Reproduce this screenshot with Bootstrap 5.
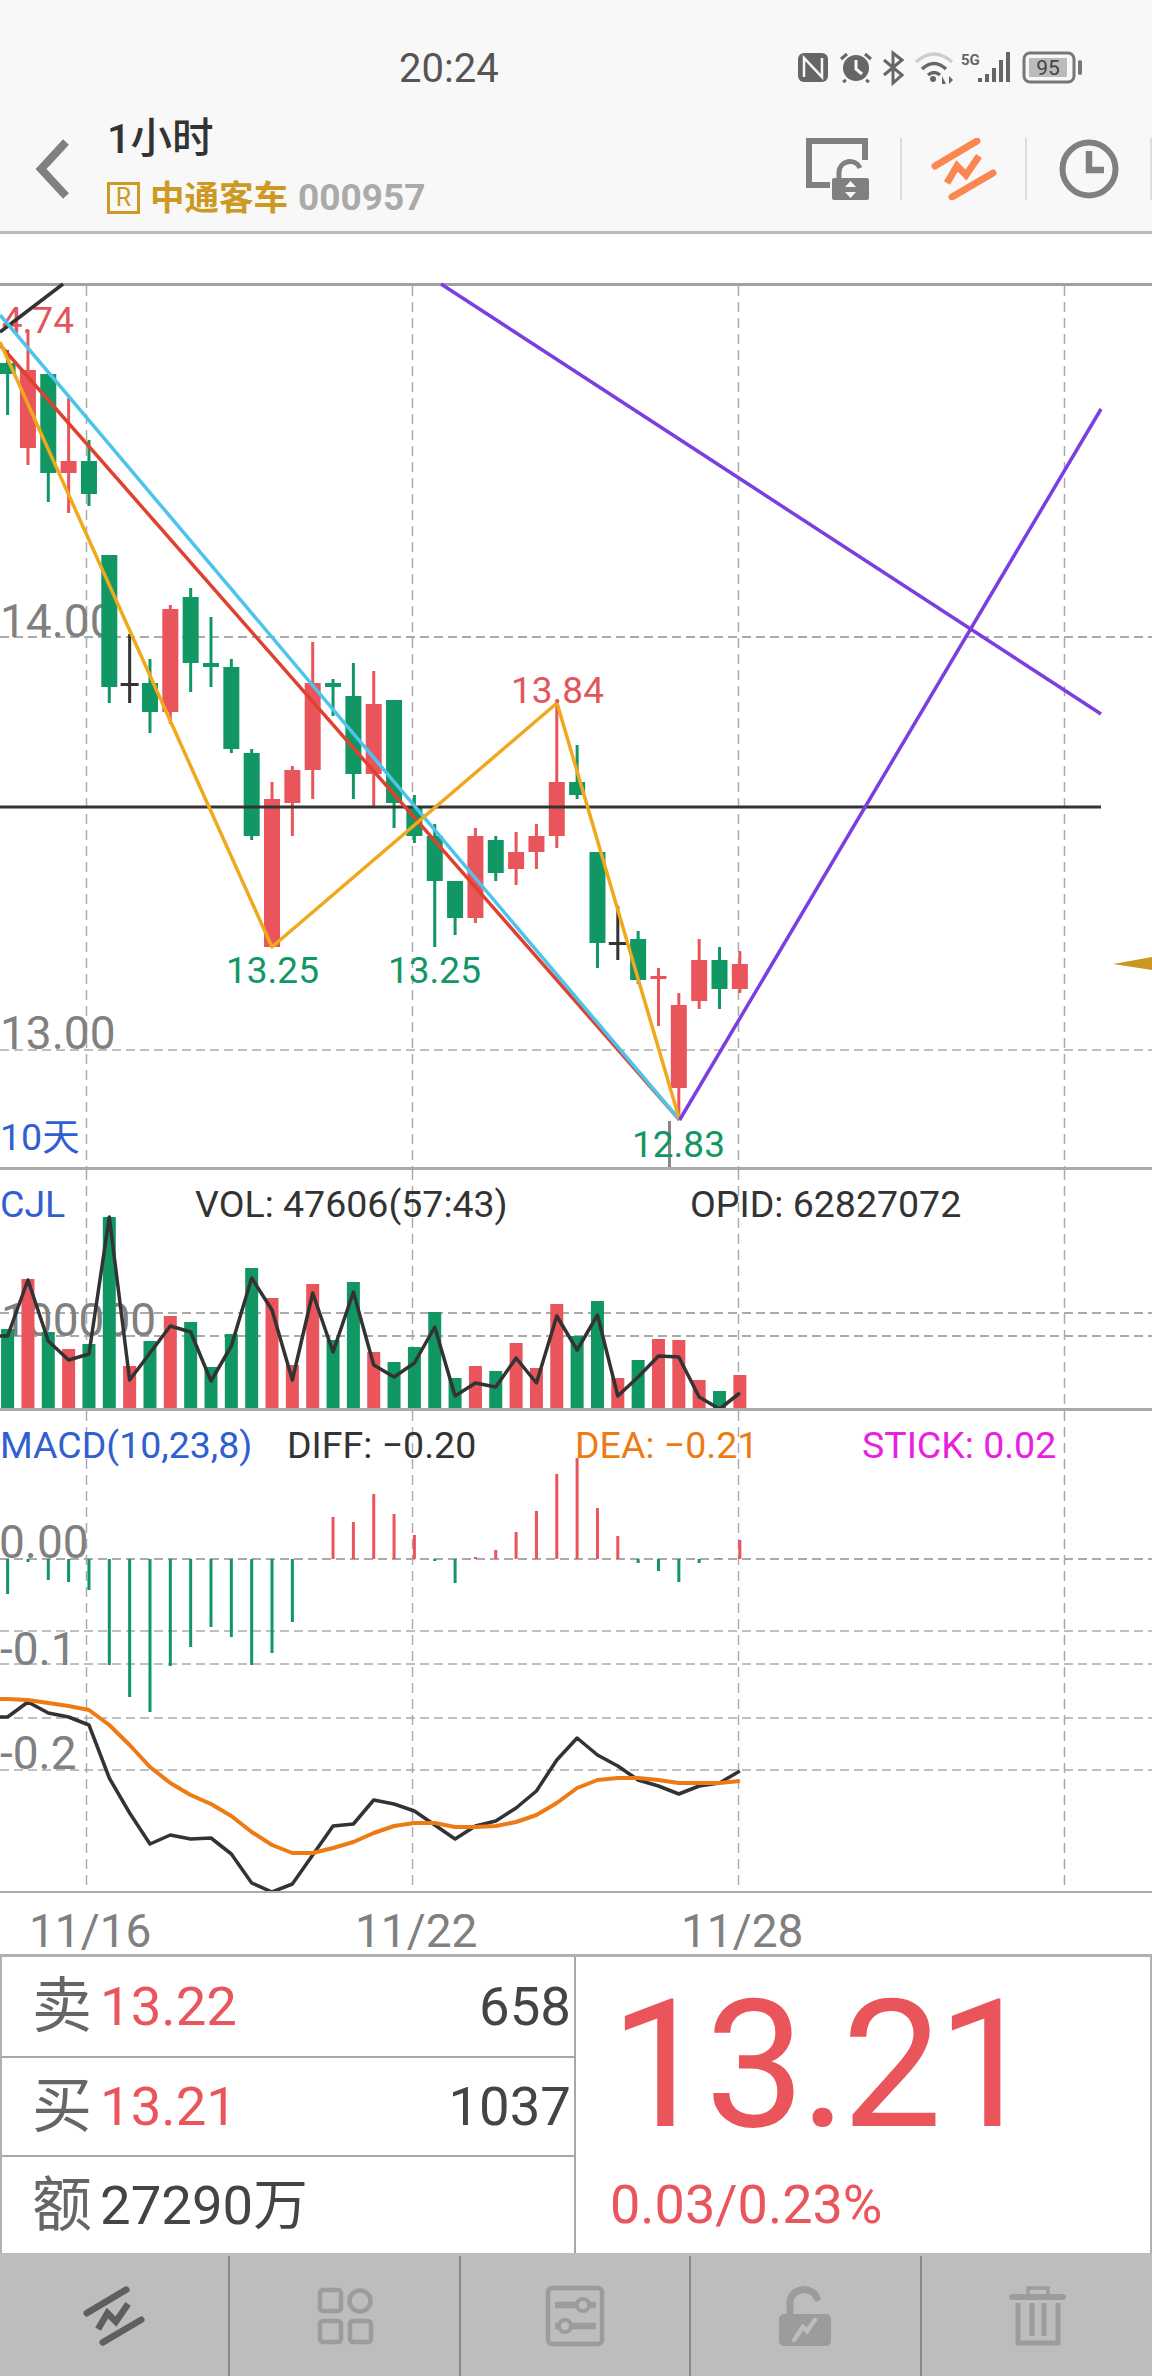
<!DOCTYPE html>
<html>
<head>
    <title>1小时 中通客车 000957</title>
    <link href="https://cdn.jsdelivr.net/npm/bootstrap@5.3.0/dist/css/bootstrap.min.css" rel="stylesheet">
    <style>
        body {
            font-family: Roboto, "Noto Sans CJK SC", sans-serif;
            background: #fff;
            width: 1152px;
            height: 2376px;
            overflow: hidden;
        }
        .top-head { background: #f8f8f8; border-bottom: 3px solid #bbb; height: 234px; }
        .status-strip { height: 96px; padding: 40px 66px 0 399px; }
        .status-icons { margin-top: 10px; }
        .clock-text { font-size: 40px; line-height: 57px; color: #555; }
        .nav-strip { height: 135px; }
        .back-btn { margin: 42px 32px 0 30px; }
        .title-main { font-size: 41.5px; line-height: 46px; font-weight: 500; color: #333; margin-top: 20px; }
        .title-sub { font-size: 34.5px; line-height: 40px; font-weight: 700; margin-top: 16px; }
        .rate-box { width: 33px; height: 32px; border: 3px solid #cc9a22; color: #cc9a22; font-size: 25px; line-height: 26px; font-weight: 400; text-align: center; margin-right: 10px; }
        .stock-name { color: #cc9a22; }
        .stock-code { color: #aaa; margin-left: 10px; font-size: 37px; }
        .tool-cell { height: 62px; margin-top: 42px; border-right: 2px solid #ddd; }
        .chart-pane { display: block; }
        .num-axis { fill: #808080; font-size: 46px; }
        .peak-up { fill: #e2555c; font-size: 37px; }
        .peak-down { fill: #119763; font-size: 37px; }
        .legend-txt { font-size: 37.5px; }
        .date-strip { height: 61px; padding-left: 29px; color: #808080; font-size: 46px; line-height: 54px; padding-top: 11px; }
        .date-cell { width: 326px; }
        .quote-board { height: 299px; border-top: 3px solid #b0b0b0; border-left: 2px solid #b0b0b0; border-right: 2px solid #b0b0b0; }
        .quote-left { width: 574px; border-right: 2px solid #a8a8a8; }
        .quote-row { height: 99px; padding: 0 3px 0 30px; font-size: 54.5px; color: #444; }
        .quote-row + .quote-row { border-top: 2px solid #a8a8a8; }
        .quote-tag { font-size: 60px; color: #666; margin-right: 8px; line-height: 1; }
        .quote-red { color: #ea555b; }
        .big-price { font-size: 178px; line-height: 170px; letter-spacing: -5px; color: #ea555b; margin: 23px 0 0 34px; }
        .small-change { font-size: 54px; line-height: 60px; color: #ea555b; margin: 25px 0 0 34px; }
        .foot-bar { background: #bdbdbd; height: 123px; padding-top: 3px; }
        .foot-cell { width: 230.4px; border-right: 2px solid #888; }
        .foot-cell:last-child { border-right: 0; }
    </style>
</head>
<body>
    <svg width="0" height="0" class="position-absolute">
        <symbol id="zig" viewBox="0 0 70 66">
            <g fill="none" stroke="currentColor" stroke-width="7" stroke-linecap="round">
                <path d="M6 30 48 5M23 61 64 37"/>
                <path d="M18 47 28 30 37 39 50 20" stroke-linecap="butt"/>
            </g>
        </symbol>
    </svg>

    <header class="top-head">
        <div class="status-strip d-flex">
            <span class="clock-text">20:24</span>
            <svg class="status-icons ms-auto" width="290" height="36" viewBox="796 50 290 36">
                <rect x="798" y="53" width="30" height="29" rx="6" fill="#666"/>
                <path d="M804 77V58L822 77V58" fill="none" stroke="#f8f8f8" stroke-width="2.500"/>
                <circle cx="856" cy="68" r="13" fill="#666"/>
                <path d="M856 60V69L862 74" fill="none" stroke="#f8f8f8" stroke-width="3"/>
                <path d="M841 59 847 54M871 59 865 54M846 80 843 82M866 80 869 82" stroke="#666" stroke-width="3"/>
                <path d="M884 60 902 75 893 83V53L902 60 884 75" fill="none" stroke="#666" stroke-width="3"/>
                <path d="M916 62Q934 46 952 62" fill="none" stroke="#ccc" stroke-width="3.500"/>
                <path d="M922 69Q934 58 946 69M928 75Q934 70 940 75" fill="none" stroke="#666" stroke-width="3.500"/>
                <circle cx="933" cy="79" r="3" fill="#666"/>
                <path d="M942 84V76L946 84ZM949 76V84L953 80Z" fill="#666"/>
                <text x="961" y="65" font-size="15" font-weight="700" fill="#666">5G</text>
                <path d="M980 78V82M987 74V82M994 68V82M1001 60V82M1008 52V82" stroke="#666" stroke-width="4"/>
                <rect x="1024" y="53" width="50" height="29" rx="6" fill="none" stroke="#777" stroke-width="3"/>
                <rect x="1029" y="58" width="38" height="19" rx="1" fill="#bbb"/>
                <text x="1048" y="75" font-size="21" fill="#444" text-anchor="middle">95</text>
                <rect x="1078" y="60" width="4" height="15" rx="2" fill="#777"/>
            </svg>
        </div>
        <div class="nav-strip d-flex align-items-start">
            <svg class="back-btn" width="45" height="62" viewBox="0 0 45 62">
                <path d="M33 4 8 31 33 58" transform="translate(3 0)" fill="none" stroke="#808080" stroke-width="8"/>
            </svg>
            <div>
                <div class="title-main">1小时</div>
                <div class="title-sub d-flex align-items-center">
                    <span class="rate-box">R</span>
                    <span class="stock-name">中通客车</span>
                    <span class="stock-code">000957</span>
                </div>
            </div>
            <div class="ms-auto d-flex">
                <div class="tool-cell">
                    <svg class="d-block" width="98" height="62" viewBox="804 138 98 62">
                        <path d="M867 160V141H811V185H832" fill="none" stroke="#808080" stroke-width="6"/>
                        <path d="M841 180V172A11 11 0 0 1 862 168" fill="none" stroke="#808080" stroke-width="5"/>
                        <rect x="834" y="178" width="37" height="22" rx="2" fill="#808080"/>
                        <path d="M852.500 181 858 187H847ZM852.500 198 858 192H847Z" fill="#f8f8f8"/>
                    </svg>
                </div>
                <div class="tool-cell" style="width:125px">
                    <svg class="d-block" width="123" height="62" viewBox="903 138 123 62" color="#fb8750">
                        <use href="#zig" x="930" y="136" width="70" height="66"/>
                    </svg>
                </div>
                <div class="tool-cell" style="width:125px">
                    <svg class="d-block" width="123" height="62" viewBox="1028 138 123 62">
                        <circle cx="1090" cy="169" r="26.500" fill="none" stroke="#808080" stroke-width="6"/>
                        <path d="M1090 151V170H1105" fill="none" stroke="#808080" stroke-width="6.500"/>
                    </svg>
                </div>
            </div>
        </div>
    </header>

    <svg class="chart-pane" id="paneMain" width="1152" height="936" viewBox="0 234 1152 936"></svg>
    <svg class="chart-pane" id="paneVol" width="1152" height="241" viewBox="0 1170 1152 241"></svg>
    <svg class="chart-pane" id="paneMacd" width="1152" height="482" viewBox="0 1411 1152 482"></svg>

    <div class="date-strip d-flex">
        <div class="date-cell">11/16</div>
        <div class="date-cell">11/22</div>
        <div class="date-cell">11/28</div>
    </div>

    <div class="quote-board d-flex">
        <div class="quote-left">
            <div class="quote-row d-flex align-items-center">
                <span class="quote-tag">卖</span><span class="quote-red">13.22</span><span class="ms-auto">658</span>
            </div>
            <div class="quote-row d-flex align-items-center">
                <span class="quote-tag">买</span><span class="quote-red">13.21</span><span class="ms-auto">1037</span>
            </div>
            <div class="quote-row d-flex align-items-center">
                <span class="quote-tag">额</span><span>27290万</span>
            </div>
        </div>
        <div class="flex-grow-1">
            <div class="big-price">13.21</div>
            <div class="small-change">0.03/0.23%</div>
        </div>
    </div>

    <div class="foot-bar d-flex">
        <div class="foot-cell d-flex align-items-center justify-content-center">
            <svg width="66" height="62" color="#5f5f5f"><use href="#zig" width="66" height="62"/></svg>
        </div>
        <div class="foot-cell d-flex align-items-center justify-content-center">
            <svg width="60" height="60" viewBox="315 2286 60 60" fill="none" stroke="#9c9c9c" stroke-width="4.500">
                <rect x="320" y="2290" width="21" height="21" rx="3"/>
                <circle cx="360" cy="2301" r="10.500"/>
                <rect x="320" y="2321" width="21" height="21" rx="3"/>
                <rect x="350" y="2321" width="21" height="21" rx="3"/>
            </svg>
        </div>
        <div class="foot-cell d-flex align-items-center justify-content-center">
            <svg width="62" height="64" viewBox="545 2284 62 64">
                <rect x="549" y="2288" width="54" height="56" rx="4" fill="none" stroke="#9c9c9c" stroke-width="4.500"/>
                <path d="M556 2305H597M556 2326H597" stroke="#9c9c9c" stroke-width="6.500"/>
                <circle cx="584" cy="2305" r="6" fill="#bdbdbd" stroke="#9c9c9c" stroke-width="4"/>
                <circle cx="566" cy="2326" r="6" fill="#bdbdbd" stroke="#9c9c9c" stroke-width="4"/>
            </svg>
        </div>
        <div class="foot-cell d-flex align-items-center justify-content-center">
            <svg width="56" height="64" viewBox="779 2284 56 64">
                <path d="M792 2316V2301A14 13 0 0 1 819 2298" fill="none" stroke="#9c9c9c" stroke-width="7" stroke-linecap="round"/>
                <rect x="781" y="2314" width="52" height="32" rx="5" fill="#9c9c9c"/>
                <path d="M796 2340 805 2327 809 2331 817 2320" fill="none" stroke="#bdbdbd" stroke-width="4.500" stroke-linecap="round"/>
            </svg>
        </div>
        <div class="foot-cell d-flex align-items-center justify-content-center">
            <svg width="58" height="62" viewBox="1008 2285 58 62" fill="none" stroke="#9c9c9c">
                <path d="M1012 2297H1063" stroke-width="6" stroke-linecap="round"/>
                <path d="M1028 2294V2288H1048V2294" stroke-width="3.500"/>
                <path d="M1018 2303V2343H1058V2303" stroke-width="5"/>
                <path d="M1032 2303V2336M1044 2303V2336" stroke-width="5"/>
            </svg>
        </div>
    </div>

    <script>
        // everything below is in full page pixels, the panes use viewBox offsets
        const GREEN = '#119763', RED = '#ea555b', DARK = '#333';
        const cx = i => 7.6 + 20.34 * i;

        // color, wick top, body top, body bottom, wick bottom
        const candles = [
            ['g',350,363,374,415], ['r',330,370,448,465], ['g',374,374,473,502], ['r',398,461,473,513],
            ['g',440,461,494,506], ['g',555,555,687,703], ['k',634,683,685,703], ['g',659,683,712,733],
            ['r',605,609,712,724], ['g',588,597,663,692], ['g',617,663,667,687], ['g',659,667,749,753],
            ['g',749,753,836,840], ['r',782,799,947,947], ['r',766,770,803,836], ['r',642,683,770,799],
            ['g',679,683,687,716], ['g',663,696,774,799], ['r',671,704,774,806], ['g',700,700,803,828],
            ['g',795,807,836,843], ['g',824,836,881,947], ['g',881,881,918,935], ['r',828,836,918,923],
            ['g',836,840,873,881], ['r',832,852,869,885], ['r',824,836,852,869], ['r',703,782,836,848],
            ['g',745,782,795,799], ['g',852,852,943,968], ['k',906,942,944,960], ['g',931,939,980,984],
            ['r',968,976,979,1026], ['r',993,1005,1088,1120], ['r',939,960,1001,1009], ['g',947,960,989,1009],
            ['r',951,964,989,993]
        ];
        const volTops = [1329,1279,1332,1349,1344,1217,1366,1341,1316,1322,1367,1334,1268,1298,1365,1284,1340,1282,1352,1362,1347,1312,1378,1366,1371,1343,1368,1304,1336,1301,1378,1360,1339,1340,1380,1391,1375];
        const volLine = [1336,1280,1341,1360,1354,1217,1380,1353,1326,1332,1381,1346,1278,1310,1380,1293,1352,1292,1365,1377,1363,1327,1396,1383,1387,1358,1383,1316,1350,1315,1396,1377,1356,1357,1397,1409,1393];
        const stick = [1594,1562,1580,1582,1590,1665,1697,1712,1666,1647,1627,1637,1665,1653,1622,1559,1517,1522,1494,1514,1535,1561,1583,1557,1550,1532,1511,1474,1458,1508,1536,1563,1571,1582,1563,1558,1540];
        const diff = [1717,1702,1713,1717,1725,1778,1813,1844,1835,1839,1838,1854,1883,1892,1884,1855,1826,1824,1800,1804,1811,1825,1839,1826,1821,1808,1791,1760,1738,1755,1766,1780,1786,1794,1786,1783,1771];
        const dea = [1699,1700,1703,1706,1710,1725,1745,1767,1783,1795,1804,1816,1832,1845,1853,1853,1848,1842,1833,1826,1823,1823,1827,1827,1826,1822,1815,1803,1788,1780,1778,1778,1780,1783,1783,1783,1781];

        const line = (x1, y1, x2, y2, c, w, dash) =>
            `<line x1="${x1}" y1="${y1}" x2="${x2}" y2="${y2}" stroke="${c}" stroke-width="${w}"${dash ? ` stroke-dasharray="${dash}"` : ''}/>`;
        const rect = (x, y, w, h, c) => `<rect x="${x}" y="${y}" width="${w}" height="${h}" fill="${c}"/>`;
        const poly = (pts, c, w) => `<polyline points="${pts.join(' ')}" fill="none" stroke="${c}" stroke-width="${w}" stroke-linejoin="round"/>`;
        const txt = (x, y, cls, s, extra) => `<text x="${x}" y="${y}" class="${cls}" ${extra || ''}>${s}</text>`;
        const vGrid = (y1, y2) => [86.5, 412.5, 738.5, 1064.5].map(x => line(x, y1, x, y2, '#aaa', 1.5, '10 6')).join('');
        const hGrid = (y, w) => line(0, y, 1152, y, '#aaa', w || 1.5, '9 5');
        const colorOf = k => k === 'g' ? GREEN : k === 'r' ? RED : DARK;
        const series = arr => arr.map((y, i) => cx(i) + ',' + y);

        // main pane
        let s = rect(0, 283, 1152, 3, '#a0a0a0') + vGrid(286, 1167) + hGrid(637, 2) + hGrid(1050);
        s += txt(0, 637, 'num-axis', '14.00') + txt(0, 1049, 'num-axis', '13.00');
        s += txt(-19, 333, 'peak-up', '14.74');
        candles.forEach((c, i) => {
            const x = cx(i), col = colorOf(c[0]);
            s += rect(x - 1.5, c[1], 3, c[4] - c[1], col);
            s += c[0] === 'k' ? rect(x - 9, c[2], 18, 3, col) : rect(x - 8, c[2], 16, c[3] - c[2], col);
        });
        s += line(0, 807, 1101, 807, '#333', 3);
        s += line(0, 332, 63, 284, '#333', 3.5);
        s += poly(['0,345', '679.6,1120'], '#e04030', 3.5);
        s += poly(['0,315', '679.6,1120'], '#4cc4ec', 3.5);
        s += poly(['0,342', '272,947', '557,703', '679.6,1120'], '#f0a81c', 3.5);
        s += poly(['441,284', '1101,714'], '#7c3ee0', 3.5);
        s += poly(['679.6,1120', '1101,409'], '#7c3ee0', 3.5);
        s += rect(668, 1121, 3, 46, '#888');
        s += txt(511, 703, 'peak-up', '13.84') + txt(226, 983, 'peak-down', '13.25') + txt(388, 983, 'peak-down', '13.25') + txt(632, 1157, 'peak-down', '12.83');
        s += txt(0, 1150, 'legend-txt', '10天', 'fill="#3060d0"');
        s += '<path d="M1113 964 1152 957V970Z" fill="#c9981e"/>';
        s += rect(0, 1167, 1152, 3, '#aaa');
        paneMain.innerHTML = s;

        // volume pane
        s = vGrid(1170, 1408) + hGrid(1313, 2) + hGrid(1336, 2);
        s += txt(1, 1336, 'num-axis', '100000');
        volTops.forEach((y, i) => {
            const k = candles[i][0] === 'k' ? 'r' : candles[i][0];
            s += rect(cx(i) - 6.5, y, 13, 1408 - y, colorOf(k));
        });
        s += poly(['0,1336'].concat(series(volLine)), '#333', 3.5);
        s += rect(0, 1408, 1152, 3, '#aaa');
        s += txt(0, 1217, 'legend-txt', 'CJL', 'fill="#3060d0"');
        s += txt(195, 1217, 'legend-txt', 'VOL: 47606(57:43)', 'fill="#333"');
        s += txt(690, 1217, 'legend-txt', 'OPID: 62827072', 'fill="#333"');
        paneVol.innerHTML = s;

        // macd pane
        s = vGrid(1411, 1891) + hGrid(1559, 2) + hGrid(1631) + hGrid(1664) + hGrid(1718) + hGrid(1770);
        s += txt(-1, 1558, 'num-axis', '0.00') + txt(0, 1665, 'num-axis', '-0.1') + txt(0, 1769, 'num-axis', '-0.2');
        stick.forEach((y, i) => {
            if (y === 1559) return;
            s += rect(cx(i) - 1.5, Math.min(y, 1559), 3, Math.abs(y - 1559), y < 1559 ? RED : GREEN);
        });
        s += poly(['0,1717'].concat(series(diff)), '#333', 3.5);
        s += poly(['0,1699'].concat(series(dea)), '#ee7a14', 4);
        s += rect(0, 1891, 1152, 2.5, '#aaa');
        s += txt(0, 1458, 'legend-txt', 'MACD(10,23,8)', 'fill="#3060d0"');
        s += txt(287, 1458, 'legend-txt', 'DIFF: −0.20', 'fill="#333"');
        s += txt(575, 1458, 'legend-txt', 'DEA: −0.21', 'fill="#ee7a14"');
        s += txt(862, 1458, 'legend-txt', 'STICK: 0.02', 'fill="#e820e0"');
        paneMacd.innerHTML = s;
    </script>
    <script src="https://cdn.jsdelivr.net/npm/bootstrap@5.3.0/dist/js/bootstrap.bundle.min.js"></script>
</body>
</html>
